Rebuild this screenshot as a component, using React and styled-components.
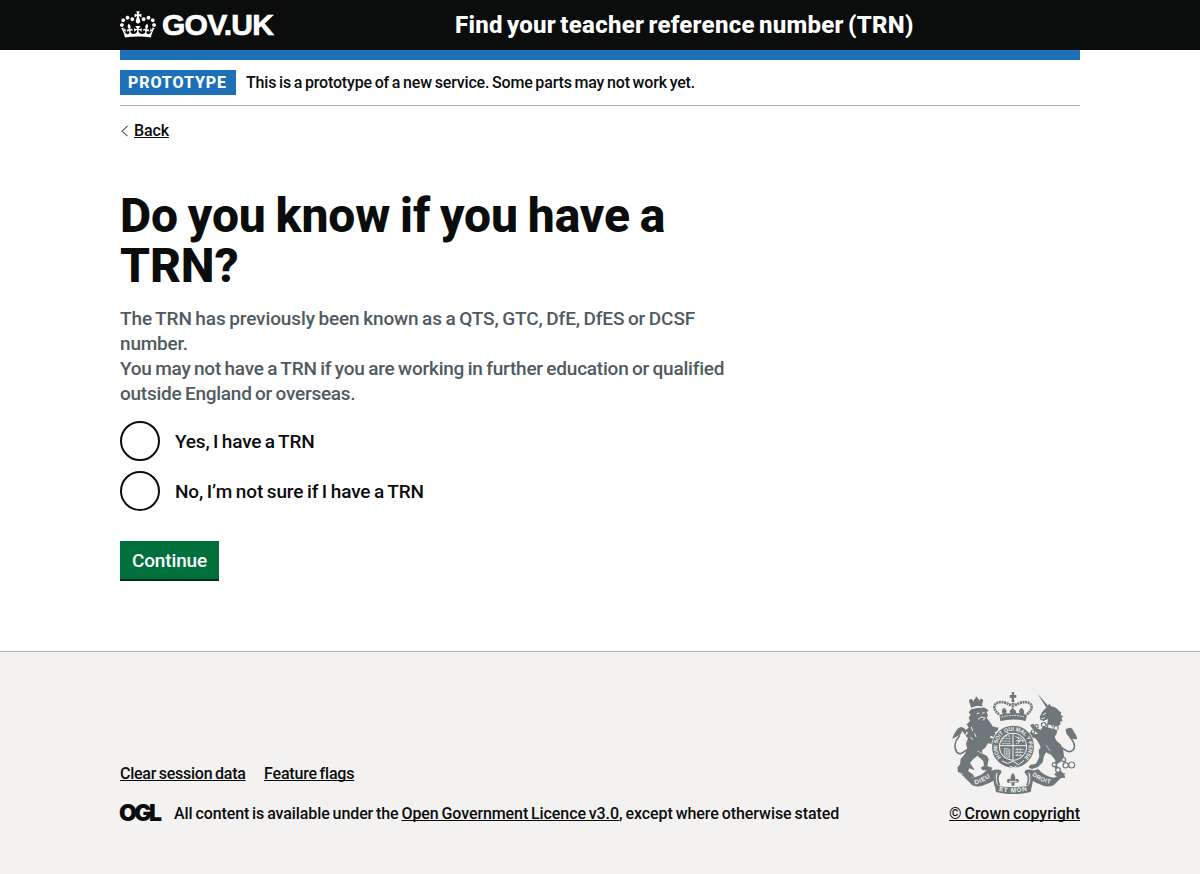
import React from "react";
import styled, { createGlobalStyle } from "styled-components";

const GlobalStyle = createGlobalStyle`
  * { box-sizing: border-box; }
  body {
    margin: 0;
    background: #f3f2f1;
    color: #0b0c0c;
    font-family: Roboto, "Liberation Sans", sans-serif;
    font-weight: 500;
  }
`;

const Page = styled.div`
  min-height: 874px;
  display: flex;
  flex-direction: column;
`;

const Container = styled.div`
  width: 960px;
  margin: 0 auto;
`;

const Header = styled.header`
  height: 50px;
  background: #0b0c0c;
  color: #fff;
`;

const HeaderRow = styled(Container)`
  height: 50px;
  display: flex;
  align-items: center;
`;

const Logo = styled.a`
  width: 335px;
  display: flex;
  align-items: center;
  gap: 6px;
  color: #fff;
  text-decoration: none;
`;

const CrownIcon = styled.svg`
  width: 36px;
  height: 27px;
  margin-top: -2px;
  fill: currentColor;
`;

const Logotype = styled.span`
  margin-top: -1px;
  font: 700 30px/32px "Liberation Sans", sans-serif;
  letter-spacing: -0.75px;
  -webkit-text-stroke: 0.7px #fff;
`;

const ServiceName = styled.a`
  font-size: 24px;
  line-height: 30px;
  font-weight: 800;
  letter-spacing: 0.27px;
  word-spacing: -2px;
  white-space: nowrap;
`;

const Main = styled.div`
  background: #fff;
  height: 601px;
`;

const BlueBar = styled.div`
  height: 10px;
  background: #1d70b8;
`;

const PhaseBanner = styled.div`
  display: flex;
  align-items: center;
  gap: 10px;
  height: 46px;
  border-bottom: 1px solid #b1b4b6;
`;

const Tag = styled.strong`
  width: 116px;
  height: 25px;
  background: #1d70b8;
  color: #fff;
  font-size: 16px;
  line-height: 25px;
  font-weight: 800;
  letter-spacing: 0.9px;
  text-indent: 8px;
`;

const Text = styled.span`
  font-size: ${(p) => p.$size || 16}px;
  line-height: ${(p) => (p.$size === 19 ? 25 : 20)}px;
  letter-spacing: ${(p) => p.$track || 0}px;
  word-spacing: -1px;
  white-space: pre;
`;

const Link = styled.a`
  font-size: 16px;
  line-height: 20px;
  letter-spacing: ${(p) => p.$track || 0}px;
  word-spacing: -1px;
  color: #0b0c0c;
  text-decoration: underline;
  text-decoration-thickness: 1px;
  text-underline-offset: 1px;
  text-decoration-skip-ink: none;
`;

const BackRow = styled.div`
  display: flex;
  align-items: center;
  gap: 5px;
  margin-top: 15px;
  height: 20px;
`;

const Chevron = styled.svg`
  width: 9px;
  height: 12px;
  fill: none;
  stroke: #505a5f;
  stroke-width: 1.1;
`;

const Heading = styled.h1`
  margin: 50px 0 15px;
  font-size: 48px;
  line-height: 50px;
  font-weight: 800;
  letter-spacing: -0.1px;
  word-spacing: -2px;
`;

const Hint = styled.div`
  display: flex;
  flex-direction: column;
  color: #505a5f;
`;

const Radios = styled.div`
  display: grid;
  gap: 10px;
  margin-top: 15px;
`;

const RadioRow = styled.label`
  display: flex;
  align-items: center;
  gap: 15px;
  height: 40px;
`;

const Radio = styled.input`
  appearance: none;
  width: 40px;
  height: 40px;
  margin: 0;
  border: 2px solid #0b0c0c;
  border-radius: 50%;
`;

const Button = styled.button`
  display: block;
  width: 99px;
  height: 38px;
  margin-top: 30px;
  padding: 1px 0 0;
  border: 0;
  background: #00703c;
  box-shadow: 0 2px 0 #002d18;
  color: #fff;
  font: 500 19px/37px Roboto, sans-serif;
  letter-spacing: -0.16px;
`;

const Footer = styled.footer`
  flex: 1;
  border-top: 1px solid #b1b4b6;
  background: #f3f2f1;
`;

const FooterRow = styled(Container)`
  display: flex;
  justify-content: space-between;
  padding-top: 40px;
`;

const FooterMeta = styled.div`
  padding-top: 72px;
`;

const FooterLinks = styled.div`
  display: flex;
  gap: 18.5px;
  margin-bottom: 20px;
`;

const Licence = styled.div`
  display: flex;
`;

const OglLogo = styled.span`
  width: 55px;
  margin-left: -1px;
  font: 900 23px/18px Inter, sans-serif;
  letter-spacing: -2.6px;
`;

const Copyright = styled.div`
  display: flex;
  flex-direction: column;
  align-items: flex-end;
  gap: 10px;
`;

const Arms = styled.svg`
  width: 125px;
  height: 102px;
  margin-right: 3px;
  color: #6f777b;
`;

const MottoText = styled.text`
  font: 700 ${(p) => p.$size || 18}px "Liberation Sans", sans-serif;
  fill: #f3f2f1;
`;

const Crown = () => (
  <CrownIcon viewBox="0 0 132 97" aria-hidden="true">
    <path
      fillRule="evenodd"
      d="M25 30.2c3.5 1.5 7.7-.2 9.1-3.7 1.5-3.6-.2-7.8-3.9-9.2-3.6-1.4-7.6.3-9.1 3.9-1.4 3.5.3 7.5 3.9 9zM9 39.5c3.6 1.5 7.8-.2 9.2-3.7 1.5-3.6-.2-7.8-3.9-9.1-3.6-1.5-7.6.2-9.1 3.8-1.4 3.5.3 7.5 3.8 9zM4.4 57.2c3.5 1.5 7.7-.2 9.1-3.8 1.5-3.6-.2-7.7-3.9-9.1-3.5-1.5-7.6.3-9.1 3.8-1.4 3.5.3 7.6 3.9 9.1zm38.3-21.4c3.5 1.5 7.7-.2 9.1-3.8 1.5-3.6-.2-7.7-3.9-9.1-3.6-1.5-7.6.3-9.1 3.8-1.3 3.6.4 7.7 3.9 9.1zm64.4-5.6c-3.6 1.5-7.8-.2-9.1-3.7-1.5-3.6.2-7.8 3.8-9.2 3.6-1.4 7.7.3 9.2 3.9 1.3 3.5-.4 7.5-3.9 9zm15.9 9.3c-3.6 1.5-7.7-.2-9.1-3.7-1.5-3.6.2-7.8 3.7-9.1 3.6-1.5 7.7.2 9.2 3.8 1.5 3.5-.3 7.5-3.8 9zm4.7 17.7c-3.6 1.5-7.8-.2-9.2-3.8-1.5-3.6.2-7.7 3.9-9.1 3.6-1.5 7.7.3 9.2 3.8 1.3 3.5-.4 7.6-3.9 9.1zM89.3 35.8c-3.6 1.5-7.8-.2-9.2-3.8-1.4-3.6.2-7.7 3.9-9.1 3.6-1.5 7.7.3 9.2 3.8 1.4 3.6-.3 7.7-3.9 9.1zM69.7 17.7l8.9 4.7V9.3l-8.9 2.8c-.2-.3-.5-.6-.9-.9L72.4 0H59.6l3.5 11.2c-.3.3-.6.5-.9.9l-8.8-2.8v13.1l8.8-4.7c.3.3.6.7.9.9l-5 15.4v.1c-.2.8-.4 1.6-.4 2.4 0 4.1 3.1 7.5 7 8.1h.2c.3 0 .7.1 1 .1.4 0 .7 0 1-.1h.2c4-.6 7.1-4.1 7.1-8.1 0-.8-.1-1.7-.4-2.4V34l-5.1-15.4c.4-.2.7-.6 1-.9zM66 92.8c16.9 0 32.8 1.1 47.1 3.2 4-16.9 8.9-26.7 14-33.5l-9.6-3.4c1 4.9 1.1 7.2 0 10.2-1.5-1.4-3-4.3-4.2-8.7L108.6 76c2.8-2 5-3.2 7.5-3.3-4.4 9.4-10 11.9-13.6 11.2-4.3-.8-6.3-4.6-5.6-7.9 1-4.7 5.7-5.9 8-.5 4.3-8.7-3-11.4-7.6-8.8 7.1-7.2 7.9-13.5 2.1-21.1-8 6.1-8.1 12.3-4.5 20.8-4.7-5.4-12.1-2.5-9.5 6.2 3.4-5.2 7.9-2 7.2 3.1-.6 4.3-6.4 7.8-13.5 7.2-10.3-.9-10.9-8-11.2-13.8 2.5-.5 7.1 1.8 11 7.3L80.2 60c-4.1 4.4-8 5.3-12.3 5.4 1.4-4.4 8-11.6 8-11.6H55.5s6.4 7.2 7.9 11.6c-4.2-.1-8-1-12.3-5.4l1.4 16.4c3.9-5.5 8.5-7.7 10.9-7.3-.3 5.8-.9 12.8-11.1 13.8-7.2.6-12.9-2.9-13.5-7.2-.7-5 3.8-8.3 7.1-3.1 2.7-8.7-4.6-11.6-9.4-6.2 3.7-8.5 3.6-14.7-4.6-20.8-5.8 7.6-5 13.9 2.2 21.1-4.7-2.6-11.9.1-7.7 8.8 2.3-5.5 7.1-4.2 8.1.5.7 3.3-1.3 7.1-5.7 7.9-3.5.7-9-1.8-13.5-11.2 2.5.1 4.7 1.3 7.5 3.3l-4.7-15.4c-1.2 4.4-2.7 7.2-4.3 8.7-1.1-3-.9-5.3 0-10.2l-9.5 3.4c5 6.9 9.9 16.7 14 33.5 14.8-2.1 30.8-3.2 47.7-3.2z"
    />
  </CrownIcon>
);

const CoatOfArms = () => (
  <Arms viewBox="36 21 375 306" aria-hidden="true">
    <defs>
      <path id="garter" d="M184 217A47.4 47.4 0 1 1 254 217" />
      <path id="scrollLeft" d="M105 298Q130 294 163 268" />
      <path id="scrollMid" d="M176 317Q219 328 267 315" />
      <path id="scrollRight" d="M276 271Q298 291 338 298" />
    </defs>
    <g fill="currentColor">
      {/* lion */}
      <path d="M94 72L130 66L146 76L140 82L144 92L140 98L150 112L158 124L170 130L172 138L164 140L168 150L160 156L152 152L146 172L136 188L126 196L128 206L140 212L146 222L142 244L158 248L154 256L128 256L122 248L132 242L130 228L112 212L98 224L90 234L98 246L104 256L88 250L84 258L98 268L104 277L84 279L66 264L54 262L52 248L60 238L62 222L74 208L82 192L78 176L84 160L76 152L84 144L76 136L86 128L80 118L90 108L86 98L92 90L86 82Z" />
      <path d="M142 132L164 126L176 128L172 138L150 146ZM140 158L160 160L166 170L158 178L142 174Z" />
      <path d="M80 137Q69 122 57 128Q48 133 36 161Q49 157 57 151Q65 147 66 137Q71 144 76 150Z" />
      {/* lion's crown */}
      <path d="M94 69L89 55Q84 44 92 42Q98 41 101 50Q101 41 107 40V35H112V39Q118 40 117 48Q121 39 127 42Q132 46 127 54L127 65Q110 59 94 69Z" />
      {/* unicorn */}
      <path d="M293 26L324 62L318 67Z" />
      <path d="M320 66L328 56L333 64Q350 66 357 78L364 82L362 90L370 94L364 100L368 108L360 110L362 118L350 124L322 116L324 102L310 108L301 104L299 96L306 82Z" />
      <path d="M310 122L352 134L350 146L344 156L350 168L362 178L370 196L372 214L362 230L350 238L356 252L372 266L376 278L356 280L342 268L350 262L344 246L346 226L334 210L318 202L312 214L308 232L294 246L276 252L266 248L270 240L288 236L298 216L296 196L302 186L294 170L286 160L272 156L266 144L274 140L282 148L294 146L276 130L270 120L280 116L288 128L302 134Z" />
      <path d="M377 133Q395 120 402 141Q412 153 411 163Q396 164 386 154Q378 149 377 133Z" />
      {/* royal crown */}
      <path d="M215 21H223L222 30H229V38H222V48H215V38H209V30H216ZM178 89Q219 79 261 89L257 108Q219 99 181 108Z" />
      <path d="M215 88Q203 79 214 73Q218 61 221 73Q235 79 224 88ZM188 87Q181 74 193 68Q204 77 198 86ZM240 87Q233 77 244 68Q256 75 251 87Z" />
    </g>
    <g fill="none" stroke="currentColor">
      <g strokeWidth="5" strokeLinecap="round">
        <path d="M58 153C44 169 41 188 51 202C63 213 72 198 86 191" />
        <path d="M389 155C405 174 408 185 399 195C388 206 376 196 366 188" />
      </g>
      <path d="M177 88C144 61 175 37 213 61M261 88C294 61 263 37 225 61M219 45V67" strokeWidth="8" strokeDasharray="6 2" />
      <g strokeWidth="3.5">
        <circle cx="290" cy="124" r="5" />
        <circle cx="279" cy="140" r="5" fill="#f3f2f1" />
        <circle cx="343" cy="239" r="6" fill="#f3f2f1" />
        <circle cx="354" cy="255" r="7" fill="#f3f2f1" />
        <circle cx="377" cy="241" r="8" />
        <circle cx="395" cy="240" r="9" />
        <circle cx="371" cy="224" r="6" fill="#f3f2f1" />
      </g>
      <g stroke="#f3f2f1" strokeWidth="3">
        <path d="M92 71Q110 62 130 67M110 86L118 84M126 85L134 83M114 103Q126 92 136 100L128 106M94 126L98 138M104 146L108 156M92 156L98 164M308 90L318 84M304 101L314 99" />
        <path d="M308 119Q330 128 354 133" strokeWidth="4" />
        <path d="M184 96Q219 87 255 96" strokeDasharray="5 3" />
        <path d="M128 206L112 198M318 180L330 198" strokeWidth="2" />
      </g>
      <path d="M306 126L304 116L313 112L320 120L314 124M322 128L324 116L334 118L338 126M340 134L344 122L354 122L354 134" strokeWidth="3.5" />
    </g>
    {/* garter and quartered shield */}
    <circle cx="219" cy="185" r="65" fill="#f3f2f1" />
    <circle cx="219" cy="185" r="52.5" fill="none" stroke="currentColor" strokeWidth="21" />
    <circle cx="219" cy="185" r="39" fill="currentColor" />
    <g fill="none" stroke="#f3f2f1" strokeWidth="3">
      <path d="M219 146V224M180 182H258" />
      <path d="M187 160H213M184 168H213M187 176H213M194 153H213M226 154L244 166L228 177M231 158Q252 157 248 174M228 167H252M236 155V176M226 194H253M225 202H252M226 211H247M232 189V215M241 189V213" strokeWidth="2.4" strokeDasharray="7 2" />
      <path d="M193 190V203Q195 219 209 217V193L193 190M199 194V210M204 195V214" strokeWidth="2.2" />
      <path d="M186 228L203 235L219 229L236 239L252 226M210 244L222 248L230 242" strokeWidth="3" />
    </g>
    <MottoText $size={17}>
      <textPath href="#garter" textLength="222" lengthAdjust="spacingAndGlyphs">HONI SOIT QUI MAL Y PENSE</textPath>
    </MottoText>
    {/* scroll */}
    <g fill="currentColor">
      <path d="M60 263L96 278Q119 278 144 252L175 264Q160 270 164 286Q150 294 138 298Q116 310 96 300Z" />
      <path d="M378 263L342 278Q319 278 294 252L263 264Q278 270 274 286Q288 294 300 298Q322 310 342 300Z" />
      <path d="M164 299Q219 314 276 299L272 321Q219 334 168 321Z" />
      <path d="M156 256Q187 249 184 263Q170 277 181 299L165 306Q155 284 169 266ZM282 256Q252 249 254 263Q270 277 258 299L274 306Q285 284 269 266Z" />
      <path d="M215 302L214 292Q199 298 201 285Q209 276 214 287Q207 274 219 264Q230 275 224 287Q231 276 237 286Q237 297 224 292L223 302Z" />
    </g>
    <path d="M171 263Q166 282 172 299M267 263Q273 282 266 299M207 290H231" stroke="#f3f2f1" strokeWidth="3" fill="none" />
    <MottoText $size={19}><textPath href="#scrollLeft" textLength="51">DIEU</textPath></MottoText>
    <MottoText $size={19}><textPath href="#scrollMid" textLength="86">ET MON</textPath></MottoText>
    <MottoText $size={18}><textPath href="#scrollRight" textLength="61">DROIT</textPath></MottoText>
  </Arms>
);

export default function App() {
  return (
    <Page>
      <GlobalStyle />
      <Header>
        <HeaderRow>
          <Logo>
            <Crown />
            <Logotype>GOV.UK</Logotype>
          </Logo>
          <ServiceName>Find your teacher reference number (TRN)</ServiceName>
        </HeaderRow>
      </Header>
      <Main>
        <Container>
          <BlueBar />
          <PhaseBanner>
            <Tag>PROTOTYPE</Tag>
            <Text $track={-0.18}>This is a prototype of a new service. Some parts may not work yet.</Text>
          </PhaseBanner>
          <BackRow>
            <Chevron viewBox="0 0 9 12"><path d="M7.5 1L2 6.2L7.5 11.2" /></Chevron>
            <Link $track={-0.15}>Back</Link>
          </BackRow>
          <Heading>Do you know if you have a<br />TRN?</Heading>
          <Hint>
            <Text $size={19} $track={-0.12}>The TRN has previously been known as a QTS, GTC, DfE, DfES or DCSF</Text>
            <Text $size={19} $track={-0.2}>number.</Text>
            <Text $size={19} $track={-0.22}>You may not have a TRN if you are working in further education or qualified</Text>
            <Text $size={19} $track={-0.25}>outside England or overseas.</Text>
          </Hint>
          <Radios>
            <RadioRow>
              <Radio type="radio" name="trn" />
              <Text $size={19} $track={-0.17}>Yes, I have a TRN</Text>
            </RadioRow>
            <RadioRow>
              <Radio type="radio" name="trn" />
              <Text $size={19} $track={-0.12}>No, I’m not sure if I have a TRN</Text>
            </RadioRow>
          </Radios>
          <Button>Continue</Button>
        </Container>
      </Main>
      <Footer>
        <FooterRow>
          <FooterMeta>
            <FooterLinks>
              <Link $track={-0.26}>Clear session data</Link>
              <Link $track={-0.2}>Feature flags</Link>
            </FooterLinks>
            <Licence>
              <OglLogo>OGL</OglLogo>
              <Text $track={-0.09}>All content is available under the </Text>
              <Link $track={-0.09}>Open Government Licence v3.0</Link>
              <Text $track={-0.06}>, except where otherwise stated</Text>
            </Licence>
          </FooterMeta>
          <Copyright>
            <CoatOfArms />
            <Link $track={-0.03}>© Crown copyright</Link>
          </Copyright>
        </FooterRow>
      </Footer>
    </Page>
  );
}
